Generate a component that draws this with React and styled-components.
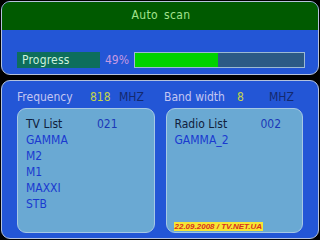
import React from "react";
import styled, { createGlobalStyle } from "styled-components";

const GlobalStyle = createGlobalStyle`
	html, body {
		margin: 0;
		padding: 0;
		background: #000;
	}
	* {
		box-sizing: border-box;
	}
`;

const tvChannels = ["GAMMA", "M2", "M1", "MAXXI", "STB"];
const radioChannels = ["GAMMA_2"];

function ChannelList({ title, count, items, labelWidth, children }) {
	return (
		<ListBox>
			<ListHead>
				<ListTitle width={labelWidth}>{title}</ListTitle>
				<ListCount>{count}</ListCount>
			</ListHead>
			{items.map((name) => (
				<ListItem key={name}>{name}</ListItem>
			))}
			{children}
		</ListBox>
	);
}

function App() {
	const progress = 49;
	return (
		<Screen>
			<GlobalStyle />
			<TopPanel>
				<Header>Auto scan</Header>
				<ProgressRow>
					<ProgressLabel>Progress</ProgressLabel>
					<Percent>{progress}%</Percent>
					<Bar>
						<Fill style={{ width: `${progress}%` }} />
					</Bar>
				</ProgressRow>
			</TopPanel>
			<BottomPanel>
				<InfoRow>
					<InfoLabel>Frequency</InfoLabel>
					<InfoValue width={29}>818</InfoValue>
					<InfoUnit width={45}>MHZ</InfoUnit>
					<InfoLabel>Band width</InfoLabel>
					<InfoValue width={32}>8</InfoValue>
					<InfoUnit>MHZ</InfoUnit>
				</InfoRow>
				<Lists>
					<ChannelList title="TV List" count="021" items={tvChannels} labelWidth={71} />
					<ChannelList title="Radio List" count="002" items={radioChannels} labelWidth={86}>
						<Stamp>22.09.2008 / TV.NET.UA</Stamp>
					</ChannelList>
				</Lists>
			</BottomPanel>
		</Screen>
	);
}

export default App;

const Screen = styled.div`
	width: 320px;
	height: 240px;
	padding: 1px;
	display: flex;
	flex-direction: column;
	gap: 5px;
	background: #000;
	font-family: "DejaVu Sans Condensed", "DejaVu Sans", sans-serif;
	font-size: 12px;
	overflow: hidden;
`;

const Panel = styled.div`
	border: 1px solid #b4c2dc;
	border-radius: 9px;
	background: #2356d6;
	overflow: hidden;
`;

const TopPanel = styled(Panel)`
	height: 74px;
	flex: none;
`;

const Header = styled.div`
	height: 28px;
	padding: 0 0 2px 2px;
	background: #005a00;
	color: #a2e28c;
	display: flex;
	align-items: center;
	justify-content: center;
	font-size: 12px;
	letter-spacing: 0.4px;
	word-spacing: 2px;
`;

const ProgressRow = styled.div`
	display: flex;
	align-items: center;
	padding: 22px 0 0 15px;
`;

const ProgressLabel = styled.div`
	width: 83px;
	height: 16px;
	line-height: 16px;
	background: #0d6e5c;
	color: #cdf2de;
	padding-left: 5px;
	letter-spacing: 0.2px;
`;

const Percent = styled.div`
	width: 34px;
	text-align: center;
	color: #c69ae2;
`;

const Bar = styled.div`
	width: 171px;
	height: 16px;
	border: 1px solid #9cbad4;
	background: #2c5a86;
`;

const Fill = styled.div`
	height: 100%;
	background: #00d200;
`;

const BottomPanel = styled(Panel)`
	flex: 1;
	padding: 8px 15px 0 15px;
`;

const InfoRow = styled.div`
	display: flex;
	align-items: center;
	height: 16px;
`;

const InfoLabel = styled.div`
	width: 73px;
	color: #c4c6f2;
`;

const InfoValue = styled.div`
	width: ${(p) => p.width}px;
	color: #c4d44a;
`;

const InfoUnit = styled.div`
	width: ${(p) => (p.width ? `${p.width}px` : "auto")};
	color: #14296e;
`;

const Lists = styled.div`
	display: flex;
	gap: 11px;
	margin-top: 3px;
`;

const ListBox = styled.div`
	position: relative;
	width: 138px;
	height: 125px;
	border: 1px solid #a6c8e4;
	border-radius: 9px;
	background: #6aa9d3;
	padding: 7px 0 0 8px;
`;

const ListHead = styled.div`
	display: flex;
	height: 16px;
	line-height: 16px;
`;

const ListTitle = styled.div`
	width: ${(p) => p.width}px;
	color: #10203c;
`;

const ListCount = styled.div`
	color: #1a38b8;
`;

const ListItem = styled.div`
	height: 16px;
	line-height: 16px;
	color: #1a3ad0;
`;

const Stamp = styled.div`
	position: absolute;
	left: 7px;
	bottom: 1px;
	padding: 0 1px;
	background: #f6e634;
	color: #d8321e;
	font-family: "Liberation Sans", sans-serif;
	font-size: 8px;
	font-weight: bold;
	font-style: italic;
	line-height: 9px;
`;
